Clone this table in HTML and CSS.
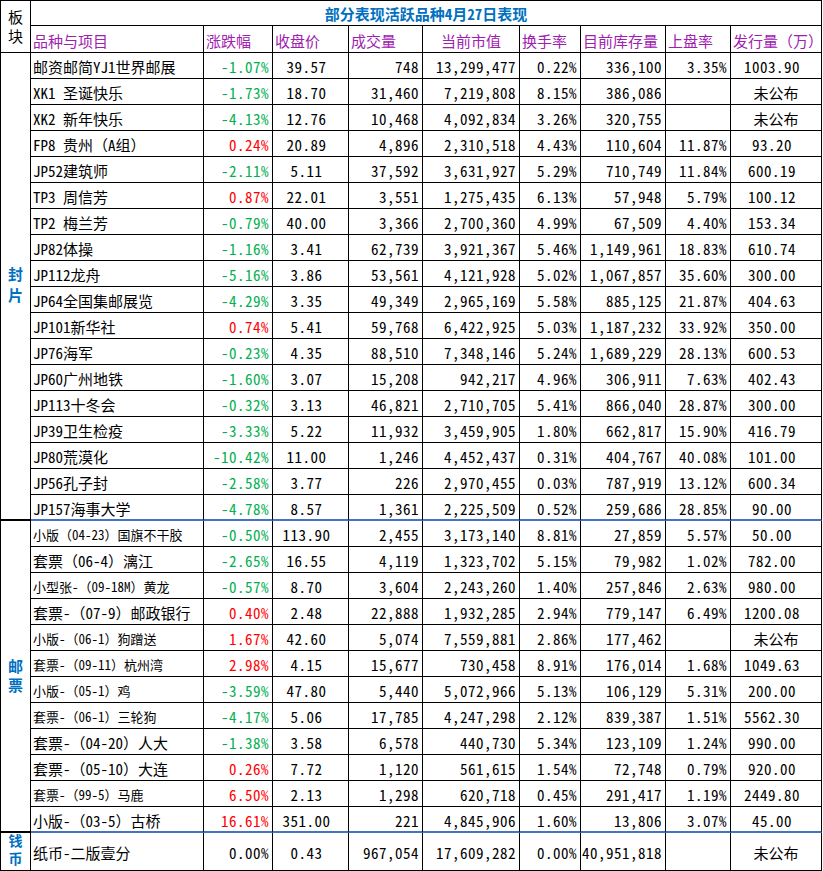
FILE: index.html
```html
<!DOCTYPE html>
<html lang="zh-CN">
<head>
<meta charset="utf-8">
<title>部分表现活跃品种4月27日表现</title>
<link rel="stylesheet" href="styles.css">
</head>
<body>
<div class="sheet">
  <div class="sec plain"><span class="vt">板块</span></div>
  <div class="title">部分表现活跃品种4月27日表现</div>
  <div class="h">品种与项目</div>
  <div class="h">涨跌幅</div>
  <div class="h">收盘价</div>
  <div class="h">成交量</div>
  <div class="h c">当前市值</div>
  <div class="h">换手率</div>
  <div class="h">目前库存量</div>
  <div class="h">上盘率</div>
  <div class="h">发行量（万）</div>

  <div class="sec s1"><span class="vt">封片</span></div>
  <div>邮资邮简YJ1世界邮展</div><div class="r g">-1.07%</div><div class="cs">39.57</div><div class="r">748</div><div class="r">13,299,477</div><div class="r">0.22%</div><div class="r">336,100</div><div class="r">3.35%</div><div class="cs">1003.90</div>
  <div>XK1 圣诞快乐</div><div class="r g">-1.73%</div><div class="cs">18.70</div><div class="r">31,460</div><div class="r">7,219,808</div><div class="r">8.15%</div><div class="r">386,086</div><div class="r"></div><div class="c">未公布</div>
  <div>XK2 新年快乐</div><div class="r g">-4.13%</div><div class="cs">12.76</div><div class="r">10,468</div><div class="r">4,092,834</div><div class="r">3.26%</div><div class="r">320,755</div><div class="r"></div><div class="c">未公布</div>
  <div>FP8 贵州（A组）</div><div class="r red">0.24%</div><div class="cs">20.89</div><div class="r">4,896</div><div class="r">2,310,518</div><div class="r">4.43%</div><div class="r">110,604</div><div class="r">11.87%</div><div class="cs">93.20</div>
  <div>JP52建筑师</div><div class="r g">-2.11%</div><div class="cs">5.11</div><div class="r">37,592</div><div class="r">3,631,927</div><div class="r">5.29%</div><div class="r">710,749</div><div class="r">11.84%</div><div class="cs">600.19</div>
  <div>TP3 周信芳</div><div class="r red">0.87%</div><div class="cs">22.01</div><div class="r">3,551</div><div class="r">1,275,435</div><div class="r">6.13%</div><div class="r">57,948</div><div class="r">5.79%</div><div class="cs">100.12</div>
  <div>TP2 梅兰芳</div><div class="r g">-0.79%</div><div class="cs">40.00</div><div class="r">3,366</div><div class="r">2,700,360</div><div class="r">4.99%</div><div class="r">67,509</div><div class="r">4.40%</div><div class="cs">153.34</div>
  <div>JP82体操</div><div class="r g">-1.16%</div><div class="cs">3.41</div><div class="r">62,739</div><div class="r">3,921,367</div><div class="r">5.46%</div><div class="r">1,149,961</div><div class="r">18.83%</div><div class="cs">610.74</div>
  <div>JP112龙舟</div><div class="r g">-5.16%</div><div class="cs">3.86</div><div class="r">53,561</div><div class="r">4,121,928</div><div class="r">5.02%</div><div class="r">1,067,857</div><div class="r">35.60%</div><div class="cs">300.00</div>
  <div>JP64全国集邮展览</div><div class="r g">-4.29%</div><div class="cs">3.35</div><div class="r">49,349</div><div class="r">2,965,169</div><div class="r">5.58%</div><div class="r">885,125</div><div class="r">21.87%</div><div class="cs">404.63</div>
  <div>JP101新华社</div><div class="r red">0.74%</div><div class="cs">5.41</div><div class="r">59,768</div><div class="r">6,422,925</div><div class="r">5.03%</div><div class="r">1,187,232</div><div class="r">33.92%</div><div class="cs">350.00</div>
  <div>JP76海军</div><div class="r g">-0.23%</div><div class="cs">4.35</div><div class="r">88,510</div><div class="r">7,348,146</div><div class="r">5.24%</div><div class="r">1,689,229</div><div class="r">28.13%</div><div class="cs">600.53</div>
  <div>JP60广州地铁</div><div class="r g">-1.60%</div><div class="cs">3.07</div><div class="r">15,208</div><div class="r">942,217</div><div class="r">4.96%</div><div class="r">306,911</div><div class="r">7.63%</div><div class="cs">402.43</div>
  <div>JP113十冬会</div><div class="r g">-0.32%</div><div class="cs">3.13</div><div class="r">46,821</div><div class="r">2,710,705</div><div class="r">5.41%</div><div class="r">866,040</div><div class="r">28.87%</div><div class="cs">300.00</div>
  <div>JP39卫生检疫</div><div class="r g">-3.33%</div><div class="cs">5.22</div><div class="r">11,932</div><div class="r">3,459,905</div><div class="r">1.80%</div><div class="r">662,817</div><div class="r">15.90%</div><div class="cs">416.79</div>
  <div>JP80荒漠化</div><div class="r g">-10.42%</div><div class="cs">11.00</div><div class="r">1,246</div><div class="r">4,452,437</div><div class="r">0.31%</div><div class="r">404,767</div><div class="r">40.08%</div><div class="cs">101.00</div>
  <div>JP56孔子封</div><div class="r g">-2.58%</div><div class="cs">3.77</div><div class="r">226</div><div class="r">2,970,455</div><div class="r">0.03%</div><div class="r">787,919</div><div class="r">13.12%</div><div class="cs">600.34</div>
  <div class="end">JP157海事大学</div><div class="end r g">-4.78%</div><div class="end cs">8.57</div><div class="end r">1,361</div><div class="end r">2,225,509</div><div class="end r">0.52%</div><div class="end r">259,686</div><div class="end r">28.85%</div><div class="end cs">90.00</div>

  <div class="sec s2"><span class="vt">邮票</span></div>
  <div class="sm">小版（04-23）国旗不干胶</div><div class="r g">-0.50%</div><div class="cs">113.90</div><div class="r">2,455</div><div class="r">3,173,140</div><div class="r">8.81%</div><div class="r">27,859</div><div class="r">5.57%</div><div class="cs">50.00</div>
  <div>套票（06-4）漓江</div><div class="r g">-2.65%</div><div class="cs">16.55</div><div class="r">4,119</div><div class="r">1,323,702</div><div class="r">5.15%</div><div class="r">79,982</div><div class="r">1.02%</div><div class="cs">782.00</div>
  <div class="sm">小型张-（09-18M）黄龙</div><div class="r g">-0.57%</div><div class="cs">8.70</div><div class="r">3,604</div><div class="r">2,243,260</div><div class="r">1.40%</div><div class="r">257,846</div><div class="r">2.63%</div><div class="cs">980.00</div>
  <div>套票-（07-9）邮政银行</div><div class="r red">0.40%</div><div class="cs">2.48</div><div class="r">22,888</div><div class="r">1,932,285</div><div class="r">2.94%</div><div class="r">779,147</div><div class="r">6.49%</div><div class="cs">1200.08</div>
  <div class="sm">小版-（06-1）狗蹭送</div><div class="r red">1.67%</div><div class="cs">42.60</div><div class="r">5,074</div><div class="r">7,559,881</div><div class="r">2.86%</div><div class="r">177,462</div><div class="r"></div><div class="c">未公布</div>
  <div class="sm">套票-（09-11）杭州湾</div><div class="r red">2.98%</div><div class="cs">4.15</div><div class="r">15,677</div><div class="r">730,458</div><div class="r">8.91%</div><div class="r">176,014</div><div class="r">1.68%</div><div class="cs">1049.63</div>
  <div class="sm">小版-（05-1）鸡</div><div class="r g">-3.59%</div><div class="cs">47.80</div><div class="r">5,440</div><div class="r">5,072,966</div><div class="r">5.13%</div><div class="r">106,129</div><div class="r">5.31%</div><div class="cs">200.00</div>
  <div class="sm">套票-（06-1）三轮狗</div><div class="r g">-4.17%</div><div class="cs">5.06</div><div class="r">17,785</div><div class="r">4,247,298</div><div class="r">2.12%</div><div class="r">839,387</div><div class="r">1.51%</div><div class="cs">5562.30</div>
  <div>套票-（04-20）人大</div><div class="r g">-1.38%</div><div class="cs">3.58</div><div class="r">6,578</div><div class="r">440,730</div><div class="r">5.34%</div><div class="r">123,109</div><div class="r">1.24%</div><div class="cs">990.00</div>
  <div>套票-（05-10）大连</div><div class="r red">0.26%</div><div class="cs">7.72</div><div class="r">1,120</div><div class="r">561,615</div><div class="r">1.54%</div><div class="r">72,748</div><div class="r">0.79%</div><div class="cs">920.00</div>
  <div class="sm">套票-（99-5）马鹿</div><div class="r red">6.50%</div><div class="cs">2.13</div><div class="r">1,298</div><div class="r">620,718</div><div class="r">0.45%</div><div class="r">291,417</div><div class="r">1.19%</div><div class="cs">2449.80</div>
  <div class="end">小版-（03-5）古桥</div><div class="end r red">16.61%</div><div class="end cs">351.00</div><div class="end r">221</div><div class="end r">4,845,906</div><div class="end r">1.60%</div><div class="end r">13,806</div><div class="end r">3.07%</div><div class="end cs">45.00</div>

  <div class="sec s3"><span class="vt">钱币</span></div>
  <div>纸币-二版壹分</div><div class="r">0.00%</div><div class="cs">0.43</div><div class="r">967,054</div><div class="r">17,609,282</div><div class="r">0.00%</div><div class="r">40,951,818</div><div class="r"></div><div class="c">未公布</div>
</div>
</body>
</html>
```
FILE: styles.css
```css
html, body {
  margin: 0;
  background: #ffffff;
}

body {
  font-family: "Noto Sans Mono CJK SC", "Noto Sans CJK SC", "Liberation Sans", sans-serif;
  font-size: 15px;
  color: #000000;
}

.sheet {
  display: grid;
  grid-template-columns: 30px 173px 69px 76px 74px 97px 61px 85px 65px 91px;
  grid-template-rows: 25px 27px repeat(30, 26px) 38px;
  width: max-content;
  border-left: 1px solid #000;
  border-top: 1px solid #000;
}

.sheet > div {
  box-sizing: border-box;
  display: flex;
  align-items: center;
  padding: 2px 2px 0 2px;
  border-right: 1px solid #000;
  border-bottom: 1px solid #000;
  white-space: nowrap;
  overflow: hidden;
  line-height: 1;
}

.sheet > .r {
  justify-content: flex-end;
  padding-right: 3px;
  letter-spacing: 0.5px;
}

.sheet > .c {
  justify-content: center;
}

.sheet > .cs {
  justify-content: center;
  padding-right: 10px;
  letter-spacing: 0.5px;
}

.sheet > .h {
  color: #a020b0;
}

.sheet > .h.c {
  justify-content: center;
}

.g {
  color: #00b050;
}

.red {
  color: #ff0000;
}

.sheet > .sm {
  font-size: 13px;
}

.sheet > .title {
  grid-column: 2 / -1;
  justify-content: center;
  padding: 0;
  color: #0070c0;
  font-weight: bold;
}

.sheet > .sec {
  justify-content: center;
  padding: 0;
  color: #0070c0;
  font-weight: bold;
  border-bottom: 2px solid #000;
}

.vt {
  writing-mode: vertical-rl;
  text-orientation: upright;
  line-height: 1;
}

.sheet > .sec.plain {
  grid-row: 1 / 3;
  color: #000;
  font-weight: normal;
  border-bottom: 1px solid #000;
}

.plain .vt {
  letter-spacing: 4px;
  padding-top: 4px;
}

.sheet > .s1 {
  grid-row: span 18;
}

.s1 .vt {
  letter-spacing: 6px;
  padding-top: 4px;
}

.sheet > .s2 {
  grid-row: span 12;
}

.s2 .vt {
  letter-spacing: 4px;
  padding-top: 4px;
}

.sheet > .s3 {
  grid-row: span 1;
  border-bottom: 1px solid #000;
}

.s3 .vt {
  font-size: 14px;
  letter-spacing: 4px;
  padding-top: 0;
}

.sheet > .end {
  border-bottom: 2px solid #4472c4;
}
```
